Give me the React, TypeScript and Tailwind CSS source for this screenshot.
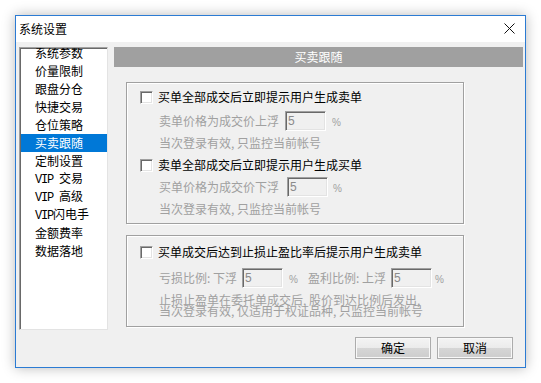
import React from 'react';

const cjk = { fontFamily: '"Noto Sans CJK SC", "Noto Sans", sans-serif' };

const Vip: React.FC<{ w: string }> = ({ w }) => (
  <span className={`inline-block ${w} font-['Liberation_Mono'] text-[12px] tracking-[-1.2px]`}>VIP</span>
);

const menuItems: React.ReactNode[] = [
  '系统参数',
  '价量限制',
  '跟盘分仓',
  '快捷交易',
  '仓位策略',
  '买卖跟随',
  '定制设置',
  <span><Vip w="w-[24px]" />交易</span>,
  <span><Vip w="w-[24px]" />高级</span>,
  <span><Vip w="w-[18px]" />闪电手</span>,
  '金额费率',
  '数据落地',
];

const Checkbox: React.FC = () => (
  <span className="inline-block w-[13px] h-[13px] bg-white border border-t-[#a0a0a0] border-l-[#a0a0a0] border-r-white border-b-white shadow-[inset_1px_1px_0_#696969,inset_-1px_-1px_0_#e3e3e3] shrink-0" />
);

const NumBox: React.FC<{ value: string }> = ({ value }) => (
  <span className="inline-flex items-center w-[41px] h-[20px] bg-[#f0f0f0] border border-t-[#a0a0a0] border-l-[#a0a0a0] border-r-white border-b-white shadow-[inset_1px_1px_0_#696969,inset_-1px_-1px_0_#e3e3e3] pl-[2px] text-[12px] text-[#8a8a8a] font-['Liberation_Sans'] shrink-0">
    {value}
  </span>
);

const Pct: React.FC = () => (
  <span className="text-[10px] text-[#a0a0a0] font-['Liberation_Sans']">%</span>
);

const Group: React.FC<{ className: string; children: React.ReactNode }> = ({ className, children }) => (
  <div className={`ml-[12px] w-[338px] border border-[#a0a0a0] shadow-[inset_1px_1px_0_#ffffff,1px_1px_0_#ffffff] ${className}`}>
    {children}
  </div>
);

const Button: React.FC<{ label: string }> = ({ label }) => (
  <button className="w-[76px] h-[22px] border border-[#acacac] bg-[linear-gradient(#f4f4f4_0%,#ebebeb_50%,#d6d6d6_50%,#cdcdcd_100%)] shadow-[inset_0_0_0_1px_#f8f8f8] text-[12px] text-black">
    {label}
  </button>
);

export default function App() {
  return (
    <div className="w-[541px] h-[383px] bg-white pt-[15px] pl-[15px]" style={cjk}>
      <div className="w-[511px] h-[353px] border border-[#2b7bd3] bg-[#f0f0f0] flex flex-col shadow-[0_0_12px_rgba(0,0,0,0.28)]">
        {/* title bar */}
        <div className="h-[26px] bg-white flex items-center justify-between pl-[3px] pr-[10px]">
          <span className="text-[12px] text-black">系统设置</span>
          <svg width="11" height="11" viewBox="0 0 11 11" className="mb-[1px]">
            <path d="M0.5 0.5 L10.5 10.5 M10.5 0.5 L0.5 10.5" stroke="#111" strokeWidth="1" />
          </svg>
        </div>

        <div className="flex pt-[5px] pl-[3px]">
          {/* menu list */}
          <div className="w-[89px] h-[283px] bg-white overflow-hidden border border-t-[#a0a0a0] border-l-[#a0a0a0] border-r-[#e3e3e3] border-b-[#e3e3e3] shadow-[inset_1px_1px_0_#696969]">
            <div className="-mt-[4px] pl-[1px]">
              {menuItems.map((item, i) => (
                <div
                  key={i}
                  className={`h-[18px] flex items-center pl-[14px] text-[12px] whitespace-nowrap ${
                    i === 5 ? 'bg-[#0078d7] text-white' : 'text-black'
                  }`}
                >
                  {item}
                </div>
              ))}
            </div>
          </div>

          {/* right panel */}
          <div className="ml-[6px] w-[409px] flex flex-col">
            <div className="h-[20px] bg-[#a0a0a0] text-white text-[12px] flex items-center justify-center">
              买卖跟随
            </div>

            <Group className="mt-[15px] h-[142px] pt-[3px]">
              <div className="h-[22px] flex items-center pl-[13px] gap-[5px] text-[12px] text-black">
                <Checkbox />
                <span>买单全部成交后立即提示用户生成卖单</span>
              </div>
              <div className="mt-[2px] h-[22px] flex items-center pl-[32px] text-[12px] text-[#a0a0a0]">
                <span className="w-[126px]">卖单价格为成交价上浮</span>
                <NumBox value="5" />
                <span className="ml-[6px]"><Pct /></span>
              </div>
              <div className="h-[22px] flex items-center pl-[32px] text-[12px] text-[#a0a0a0]">
                当次登录有效, 只监控当前帐号
              </div>
              <div className="h-[22px] flex items-center pl-[13px] gap-[5px] text-[12px] text-black">
                <Checkbox />
                <span>卖单全部成交后立即提示用户生成买单</span>
              </div>
              <div className="h-[22px] flex items-center pl-[32px] text-[12px] text-[#a0a0a0]">
                <span className="w-[128px]">买单价格为成交价下浮</span>
                <NumBox value="5" />
                <span className="ml-[5px]"><Pct /></span>
              </div>
              <div className="h-[22px] flex items-center pl-[32px] text-[12px] text-[#a0a0a0]">
                当次登录有效, 只监控当前帐号
              </div>
            </Group>

            <Group className="mt-[11px] h-[92px] pt-[5px]">
              <div className="h-[22px] flex items-center pl-[13px] gap-[5px] text-[12px] text-black">
                <Checkbox />
                <span>买单成交后达到止损止盈比率后提示用户生成卖单</span>
              </div>
              <div className="mt-[5px] h-[20px] flex items-center pl-[32px] text-[12px] text-[#a0a0a0]">
                <span className="w-[83px]">亏损比例: 下浮</span>
                <NumBox value="5" />
                <span className="ml-[6px] w-[19px]"><Pct /></span>
                <span className="w-[83px]">盈利比例: 上浮</span>
                <NumBox value="5" />
                <span className="ml-[3px]"><Pct /></span>
              </div>
              <div className="mt-[6px] pl-[32px] text-[12px] leading-[11px] text-[#a0a0a0]">
                <div>止损止盈单在委托单成交后, 股价到达比例后发出,</div>
                <div>当次登录有效, 仅适用于权证品种, 只监控当前帐号</div>
              </div>
            </Group>

            <div className="mt-[10px] pr-[10px] flex justify-end gap-[6px]">
              <Button label="确定" />
              <Button label="取消" />
            </div>
          </div>
        </div>
      </div>
    </div>
  );
}
